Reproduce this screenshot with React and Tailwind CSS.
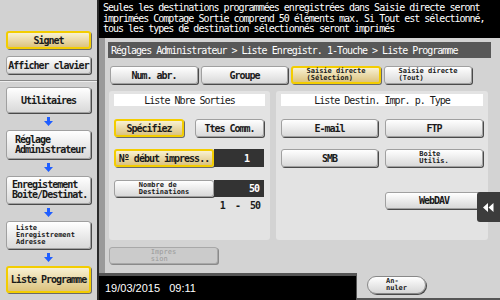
import React from 'react';

const grayBtn = 'border border-[#a0a0a0] bg-gradient-to-b from-[#ffffff] to-[#d9d9d9] shadow-[1px_1px_0_#4a4a4a]';
const yellowBtn = 'border-2 border-[#f3cd00] bg-gradient-to-b from-[#f8f1d2] to-[#dcc37e] shadow-[1px_1px_0_#6a6a6a]';

function Btn({ children, yellow, className = '' }) {
  return (
    <div className={`flex items-center justify-center rounded-[3px] text-[#1a1a1a] ${yellow ? yellowBtn : grayBtn} ${className}`}>
      {children}
    </div>
  );
}

function Arrow() {
  return (
    <div className="flex h-[17px] items-center justify-center">
      <svg width="9" height="9" viewBox="0 0 9 9">
        <path d="M3 0h3v4h3L4.5 9 0 4h3z" fill="#1f5eff" />
      </svg>
    </div>
  );
}

function Tiny({ lines, className = '' }) {
  return (
    <div className={`flex flex-col text-[7px] leading-[7px] tracking-[0px] ${className}`}>
      {lines.map((l) => (
        <span key={l}>{l}</span>
      ))}
    </div>
  );
}

export default function App() {
  return (
    <div className="flex h-[300px] w-[500px] overflow-hidden bg-black font-['DejaVu_Sans_Mono','Liberation_Mono',monospace] text-[10px] tracking-[-1px]">
      {/* sidebar */}
      <div className="flex w-[99px] flex-col bg-[#d2d2d2] border-r-2 border-[#2a2a2a]">
        <div className="flex h-[80px] flex-col gap-[7px] px-[6px] pt-[31px] font-bold">
          <Btn yellow className="h-[18px]">Signet</Btn>
          <Btn className="h-[18px]">Afficher clavier</Btn>
        </div>
        <div className="h-[2px] border-t border-[#8a8a8a] bg-[#eeeeee]" />
        <div className="flex flex-col px-[6px] pt-[5px] font-bold">
          <Btn className="h-[26px]">Utilitaires</Btn>
          <Arrow />
          <Btn className="h-[29px] !justify-start pl-[8px]">
            <div className="leading-[10px]">Réglage<br />Administrateur</div>
          </Btn>
          <Arrow />
          <Btn className="h-[28px] !justify-start pl-[5px]">
            <div className="leading-[10px]">Enregistement<br />Boite/Destinat.</div>
          </Btn>
          <Arrow />
          <Btn className="h-[28px] !justify-start pl-[9px]">
            <Tiny lines={['Liste', 'Enregistrement', 'Adresse']} />
          </Btn>
          <Arrow />
          <Btn yellow className="h-[27px]">Liste Programme</Btn>
        </div>
      </div>

      {/* main */}
      <div className="flex flex-1 flex-col">
        <div className="h-[38px] bg-black px-[4px] pt-[3px] text-[10px] leading-[10.5px] text-white">
          <div>Seules les destinations programmées enregistrées dans Saisie directe seront</div>
          <div>imprimées Comptage Sortie comprend 50 éléments max. Si Tout est sélectionné,</div>
          <div>tous les types de destination sélectionnés seront imprimés</div>
        </div>

        <div className="relative flex h-[235px] flex-col border-l-[6px] border-[#9a9a9a] bg-[#d3d3d3] pl-[3px] pr-[9px] pt-[4px]">
          <div className="flex h-[16px] items-center bg-[#585858] px-[3px] text-white">
            Réglages Administrateur &gt; Liste Enregistr. 1-Touche &gt; Liste Programme
          </div>

          <div className="mt-[8px] flex gap-[3px] pl-[2px] font-bold">
            <Btn className="h-[18px] w-[88px]">Num. abr.</Btn>
            <Btn className="h-[18px] w-[87px]">Groupe</Btn>
            <Btn yellow className="h-[18px] w-[90px]">
              <Tiny lines={['Saisie directe', '(Sélection)']} />
            </Btn>
            <Btn className="h-[18px] w-[88px]">
              <Tiny lines={['Saisie directe', '(Tout)']} />
            </Btn>
          </div>

          <div className="mt-[7px] flex gap-[6px] pl-[1px]">
            <div className="flex h-[149px] w-[161px] flex-col rounded-[3px] bg-[#e3e3e3] px-[5px] pt-[3px]">
              <div className="flex h-[12px] items-center justify-center bg-white text-[#1a1a1a]">Liste Nbre Sorties</div>
              <div className="mt-[13px] flex justify-between pr-[1px] font-bold">
                <Btn yellow className="h-[18px] w-[70px]">Spécifiez</Btn>
                <Btn className="h-[18px] w-[69px]">Ttes Comm.</Btn>
              </div>
              <div className="mt-[12px] flex font-bold">
                <Btn yellow className="h-[18px] w-[100px]">Nº début impress..</Btn>
                <div className="flex h-[18px] w-[50px] items-center justify-end bg-[#333333] pr-[15px] text-white">1</div>
              </div>
              <div className="mt-[13px] flex font-bold">
                <Btn className="h-[17px] w-[100px]">
                  <Tiny lines={['Nombre de', 'Destinations']} />
                </Btn>
                <div className="flex h-[17px] w-[50px] items-center justify-end bg-[#333333] pr-[5px] text-white">50</div>
              </div>
              <div className="mt-[1px] pr-[5px] text-right font-bold text-[#1a1a1a]">1&nbsp;&nbsp;-&nbsp;&nbsp;50</div>
            </div>

            <div className="flex h-[149px] w-[212px] flex-col rounded-[3px] bg-[#e3e3e3] px-[5px] pt-[3px]">
              <div className="flex h-[12px] items-center justify-center bg-white text-[#1a1a1a]">Liste Destin. Impr. p. Type</div>
              <div className="mt-[13px] flex justify-between font-bold">
                <Btn className="h-[18px] w-[97px]">E-mail</Btn>
                <Btn className="h-[18px] w-[98px]">FTP</Btn>
              </div>
              <div className="mt-[12px] flex justify-between font-bold">
                <Btn className="h-[18px] w-[97px]">SMB</Btn>
                <Btn className="h-[18px] w-[98px]">
                  <Tiny lines={['Boite', 'Utilis.']} />
                </Btn>
              </div>
              <div className="mt-[25px] flex justify-end font-bold">
                <Btn className="h-[17px] w-[98px]">WebDAV</Btn>
              </div>
            </div>
          </div>

          <div className="mt-[7px] pl-[1px]">
            <div className="flex h-[17px] w-[109px] items-center justify-center rounded-[3px] border border-[#a8a8a8] bg-[#cbcbcb] text-[#9a9a9a] shadow-[1px_1px_0_#8a8a8a]">
              <Tiny lines={['Impres', 'sion']} />
            </div>
          </div>

          <div className="absolute right-0 top-[154px] flex h-[30px] w-[23px] items-center justify-center rounded-l-[3px] bg-[#3c3c3c]">
            <svg width="11" height="9" viewBox="0 0 11 9">
              <path d="M5 0v9L0 4.5z M10.5 0v9L5.5 4.5z" fill="#ffffff" />
            </svg>
          </div>
        </div>

        <div className="flex h-[27px]">
          <div className="flex w-[257px] items-center border-t-[3px] border-[#555555] bg-black pl-[6px] font-['Liberation_Sans',sans-serif] text-[11px] tracking-normal text-white">
            19/03/2015&nbsp;&nbsp;&nbsp;09:11
          </div>
          <div className="flex flex-1 items-start border-l border-[#555555] border-b-2 bg-[#d3d3d3] pl-[10px] pt-[3px]">
            <div className="flex h-[18px] w-[59px] items-center justify-center rounded-full border border-[#888888] bg-gradient-to-b from-[#ffffff] to-[#d6d6d6] shadow-[1px_1px_0_#4a4a4a] font-bold text-[#1a1a1a]">
              <Tiny lines={['An-', 'nuler']} />
            </div>
          </div>
        </div>
      </div>
    </div>
  );
}
